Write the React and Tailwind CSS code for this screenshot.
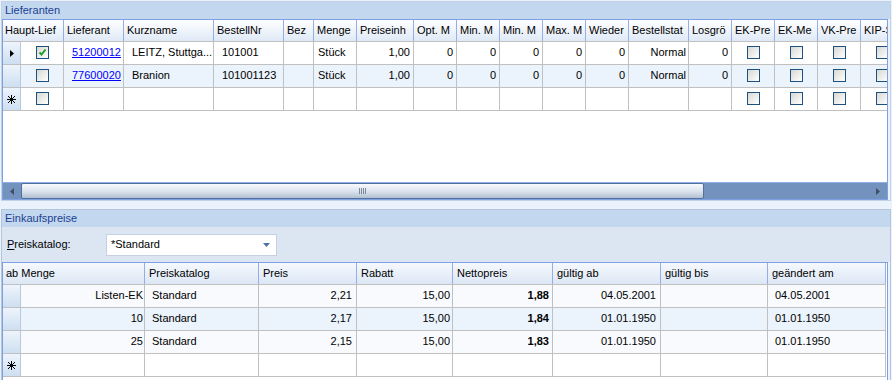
import React from 'react';

const topHead = [
  ['Haupt-Lief', 'w-[61px]', 'pl-[2px]'],
  ['Lieferant', 'w-[60px]', 'pl-[3px]'],
  ['Kurzname', 'w-[90px]', 'pl-[3px]'],
  ['BestellNr', 'w-[70px]', 'pl-[3px]'],
  ['Bez', 'w-[30px]', 'pl-[3px]'],
  ['Menge', 'w-[43px]', 'pl-[3px]'],
  ['Preiseinh', 'w-[57px]', 'pl-[3px]'],
  ['Opt. M', 'w-[43px]', 'pl-[3px]'],
  ['Min. M', 'w-[43px]', 'pl-[3px]'],
  ['Min. M', 'w-[43px]', 'pl-[3px]'],
  ['Max. M', 'w-[43px]', 'pl-[3px]'],
  ['Wieder', 'w-[43px]', 'pl-[3px]'],
  ['Bestellstat', 'w-[60px]', 'pl-[3px]'],
  ['Losgrö', 'w-[43px]', 'pl-[3px]'],
  ['EK-Pre', 'w-[43px]', 'pl-[3px]'],
  ['EK-Me', 'w-[43px]', 'pl-[3px]'],
  ['VK-Pre', 'w-[43px]', 'pl-[3px]'],
  ['KIP-Sperre', 'w-[43px]', 'pl-[3px]'],
];

// width + alignment class for each body column of the Lieferanten grid
const topCols = [
  'w-[43px] justify-center',
  'w-[60px] justify-start pl-[8px]',
  'w-[90px] justify-start pl-[8px]',
  'w-[70px] justify-start pl-[8px]',
  'w-[30px] justify-start',
  'w-[43px] justify-start pl-[4px]',
  'w-[57px] justify-end pr-[3px]',
  'w-[43px] justify-end pr-[3px]',
  'w-[43px] justify-end pr-[3px]',
  'w-[43px] justify-end pr-[3px]',
  'w-[43px] justify-end pr-[3px]',
  'w-[43px] justify-end pr-[3px]',
  'w-[60px] justify-end pr-[2px]',
  'w-[43px] justify-end pr-[3px]',
  'w-[43px] justify-center',
  'w-[43px] justify-center',
  'w-[43px] justify-center',
  'w-[43px] justify-center',
];

const lieferanten = [
  { mark: 'current', haupt: true, nr: '51200012', kurz: 'LEITZ, Stuttga...', best: '101001', menge: 'Stück', pe: '1,00', nums: ['0', '0', '0', '0', '0'], stat: 'Normal', los: '0' },
  { mark: null, haupt: false, nr: '77600020', kurz: 'Branion', best: '101001123', menge: 'Stück', pe: '1,00', nums: ['0', '0', '0', '0', '0'], stat: 'Normal', los: '0' },
];

const botHead = [
  ['ab Menge', 'w-[142px]'],
  ['Preiskatalog', 'w-[114px]'],
  ['Preis', 'w-[98px]'],
  ['Rabatt', 'w-[96px]'],
  ['Nettopreis', 'w-[100px]'],
  ['gültig ab', 'w-[108px]'],
  ['gültig bis', 'w-[107px]'],
  ['geändert am', 'w-[118px]'],
];

const botCols = [
  'w-[124px] justify-end pr-[1px]',
  'w-[114px] justify-start pl-[7px]',
  'w-[98px] justify-end pr-[4px]',
  'w-[96px] justify-end pr-[2px]',
  'w-[100px] justify-end pr-[3px] font-bold',
  'w-[108px] justify-end pr-[4px]',
  'w-[107px] justify-end pr-[4px]',
  'w-[118px] justify-start pl-[7px]',
];

const preise = [
  ['Listen-EK', 'Standard', '2,21', '15,00', '1,88', '04.05.2001', '', '04.05.2001'],
  ['10', 'Standard', '2,17', '15,00', '1,84', '01.01.1950', '', '01.01.1950'],
  ['25', 'Standard', '2,15', '15,00', '1,83', '01.01.1950', '', '01.01.1950'],
];

const Check = ({ checked }) => (
  <span className="flex h-[13px] w-[13px] items-center justify-center border border-[#1c5180] bg-linear-to-br from-[#d8d8d2] to-[#ffffff]">
    {checked && (
      <svg width="9" height="9" viewBox="0 0 9 9">
        <path d="M1.5 4.5 L3.5 6.5 L7.5 1.5" stroke="#22a022" strokeWidth="2" fill="none" />
      </svg>
    )}
  </span>
);

const RowMark = ({ mark }) => (
  <div className="flex h-full w-[18px] shrink-0 items-center justify-center border-r border-[#b9c9dc] bg-linear-to-b from-[#eef4fb] to-[#cddff1]">
    {mark === 'current' && (
      <svg width="4" height="7" viewBox="0 0 4 7">
        <path d="M0 0 L4 3.5 L0 7 Z" fill="#000" />
      </svg>
    )}
    {mark === 'new' && (
      <svg width="9" height="9" viewBox="0 0 9 9" stroke="#000" strokeWidth="1">
        <path d="M4.5 0 V9 M0 4.5 H9 M1 1 L8 8 M8 1 L1 8" />
      </svg>
    )}
  </div>
);

const Cell = ({ cls, children }) => (
  <div className={`flex h-full shrink-0 items-center overflow-hidden whitespace-nowrap border-r border-[#c0c0c0] pb-[2px] ${cls}`}>
    {children}
  </div>
);

const HeadCell = ({ w, pad = 'pl-[3px]', children }) => (
  <div className={`flex h-full shrink-0 items-center overflow-hidden whitespace-nowrap border-r border-[#93aee8] ${w} ${pad}`}>
    {children}
  </div>
);

const PanelTitle = ({ children }) => (
  <div className="flex h-[17px] shrink-0 items-center bg-[#c3d8ef] pl-[3px] text-[11px] text-[#1b4190]">{children}</div>
);

const Scrollbar = () => (
  <div className="flex h-[17px] shrink-0 border-t border-[#8eaee8] bg-[#7392be]">
    <div className="flex w-[18px] items-center justify-center">
      <svg width="4" height="7" viewBox="0 0 4 7">
        <path d="M4 0 L0 3.5 L4 7 Z" fill="#3f4f66" />
      </svg>
    </div>
    <div className="flex w-[683px] items-center justify-center rounded-[2px] border border-[#52709c] bg-linear-to-b from-[#f7f9fc] via-[#dde4ee] to-[#b3c0d2]">
      <div className="flex gap-[1px]">
        <span className="h-[6px] w-[1px] bg-[#7a889c]" />
        <span className="h-[6px] w-[1px] bg-[#7a889c]" />
        <span className="h-[6px] w-[1px] bg-[#7a889c]" />
        <span className="h-[6px] w-[1px] bg-[#7a889c]" />
      </div>
    </div>
    <div className="flex-1" />
    <div className="flex w-[18px] items-center justify-center">
      <svg width="4" height="7" viewBox="0 0 4 7">
        <path d="M0 0 L4 3.5 L0 7 Z" fill="#3f4f66" />
      </svg>
    </div>
  </div>
);

export default function App() {
  return (
    <div className="h-[380px] w-[892px] overflow-hidden bg-[#eaf2fb] font-['Liberation_Sans',Arial,sans-serif] text-[11px] text-black">
      {/* Lieferanten */}
      <div className="mx-[1px] mt-[1px] flex h-[200px] flex-col border border-[#c2d2e6] bg-[#eaf2fb]">
        <PanelTitle>Lieferanten</PanelTitle>
        <div className="mr-[2px] flex h-[181px] flex-col overflow-hidden border border-[#7f9fe3] bg-white">
          <div className="flex h-[22px] w-max shrink-0 border-b border-[#c0c0c0] bg-linear-to-b from-[#ffffff] to-[#dfe9f6]">
            {topHead.map(([label, w, pad], i) => (
              <HeadCell key={i} w={w} pad={pad}>{label}</HeadCell>
            ))}
          </div>
          {lieferanten.map((r, i) => (
            <div key={i} className={`flex h-[23px] w-max shrink-0 border-b border-[#c0c0c0] ${i % 2 ? 'bg-[#ebf3fc]' : 'bg-white'}`}>
              <RowMark mark={r.mark} />
              <Cell cls={topCols[0]}><Check checked={r.haupt} /></Cell>
              <Cell cls={topCols[1]}><span className="text-[#0000ff] underline">{r.nr}</span></Cell>
              <Cell cls={topCols[2]}>{r.kurz}</Cell>
              <Cell cls={topCols[3]}>{r.best}</Cell>
              <Cell cls={topCols[4]} />
              <Cell cls={topCols[5]}>{r.menge}</Cell>
              <Cell cls={topCols[6]}>{r.pe}</Cell>
              {r.nums.map((n, j) => (
                <Cell key={j} cls={topCols[7 + j]}>{n}</Cell>
              ))}
              <Cell cls={topCols[12]}>{r.stat}</Cell>
              <Cell cls={topCols[13]}>{r.los}</Cell>
              {[14, 15, 16, 17].map((c) => (
                <Cell key={c} cls={topCols[c]}><Check /></Cell>
              ))}
            </div>
          ))}
          <div className="flex h-[23px] w-max shrink-0 border-b border-[#c0c0c0] bg-white">
            <RowMark mark="new" />
            {topCols.map((c, j) => (
              <Cell key={j} cls={c}>{(j === 0 || j >= 14) && <Check />}</Cell>
            ))}
          </div>
          <div className="flex-1" />
          <Scrollbar />
        </div>
      </div>

      {/* Einkaufspreise */}
      <div className="mx-[1px] mt-[8px] flex h-[200px] flex-col border border-[#b5c6dc] bg-[#eaf2fb]">
        <PanelTitle>Einkaufspreise</PanelTitle>
        <div className="flex h-[35px] shrink-0 items-center bg-[#dce6f3] pl-[5px]">
          <span className="w-[99px]"><span className="underline">P</span>reiskatalog:</span>
          <div className="flex h-[22px] w-[171px] items-center justify-between border border-[#c4d1e2] bg-white pl-[4px] pr-[6px]">
            <span>*Standard</span>
            <svg width="7" height="4" viewBox="0 0 7 4">
              <path d="M0 0 H7 L3.5 4 Z" fill="#4f70a8" />
            </svg>
          </div>
        </div>
        <div className="mr-[2px] flex flex-1 flex-col overflow-hidden border border-[#7f9fe3] bg-white">
          <div className="flex h-[22px] w-max shrink-0 border-b border-[#c0c0c0] bg-linear-to-b from-[#f6f9fd] to-[#dce7f5]">
            {botHead.map(([label, w], i) => (
              <HeadCell key={i} w={w} pad={i === 0 ? 'pl-[3px]' : 'pl-[4px]'}>{label}</HeadCell>
            ))}
          </div>
          {preise.map((r, i) => (
            <div key={i} className={`flex h-[23px] w-max shrink-0 border-b border-[#c0c0c0] ${i % 2 ? 'bg-[#ebf3fc]' : 'bg-[#f8fafd]'}`}>
              <RowMark mark={null} />
              {r.map((v, j) => (
                <Cell key={j} cls={botCols[j]}>{v}</Cell>
              ))}
            </div>
          ))}
          <div className="flex h-[23px] w-max shrink-0 border-b border-[#c0c0c0] bg-white">
            <RowMark mark="new" />
            {botCols.map((c, j) => (
              <Cell key={j} cls={c} />
            ))}
          </div>
        </div>
      </div>
    </div>
  );
}
